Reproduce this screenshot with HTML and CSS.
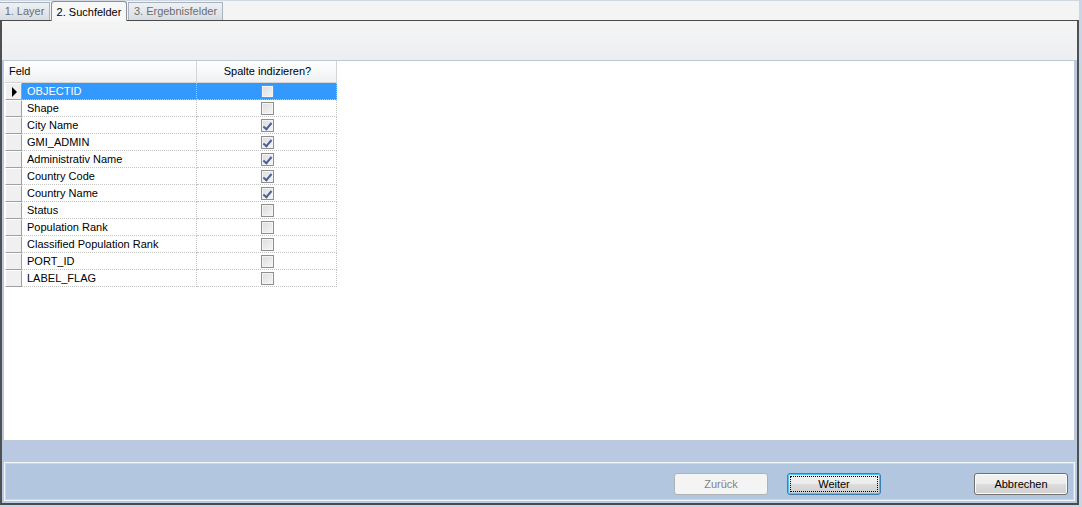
FILE: index.html
```html
<!DOCTYPE html>
<html>
<head>
<meta charset="utf-8">
<link rel="stylesheet" href="styles.css">
</head>
<body>
<div class="window">
  <div class="tabs">
    <div class="tab t1">1. Layer</div>
    <div class="tab t2 active">2. Suchfelder</div>
    <div class="tab t3">3. Ergebnisfelder</div>
    <div class="tabfill"></div>
  </div>
  <div class="panel">
    <div class="toolbar"></div>
    <div class="gridbox">
      <div class="grid">
        <div class="hdr hdr-feld">Feld</div>
        <div class="hdr hdr-idx">Spalte indizieren?</div>

        <div class="rh sel"><span class="arrow"></span></div><div class="cell name selc">OBJECTID</div><div class="cell chk selc"><span class="cb"></span></div>
        <div class="rh"></div><div class="cell name">Shape</div><div class="cell chk"><span class="cb"></span></div>
        <div class="rh"></div><div class="cell name">City Name</div><div class="cell chk"><span class="cb on"></span></div>
        <div class="rh"></div><div class="cell name">GMI_ADMIN</div><div class="cell chk"><span class="cb on"></span></div>
        <div class="rh"></div><div class="cell name">Administrativ Name</div><div class="cell chk"><span class="cb on"></span></div>
        <div class="rh"></div><div class="cell name">Country Code</div><div class="cell chk"><span class="cb on"></span></div>
        <div class="rh"></div><div class="cell name">Country Name</div><div class="cell chk"><span class="cb on"></span></div>
        <div class="rh"></div><div class="cell name">Status</div><div class="cell chk"><span class="cb"></span></div>
        <div class="rh"></div><div class="cell name">Population Rank</div><div class="cell chk"><span class="cb"></span></div>
        <div class="rh"></div><div class="cell name">Classified Population Rank</div><div class="cell chk"><span class="cb"></span></div>
        <div class="rh"></div><div class="cell name">PORT_ID</div><div class="cell chk"><span class="cb"></span></div>
        <div class="rh"></div><div class="cell name">LABEL_FLAG</div><div class="cell chk"><span class="cb"></span></div>
      </div>
    </div>
    <div class="strip"></div>
    <div class="btnarea">
      <div class="btnbox">
        <button class="btn disabled">Zurück</button>
        <button class="btn focus"><span class="focusrect">Weiter</span></button>
        <button class="btn cancel">Abbrechen</button>
      </div>
    </div>
  </div>
</div>
</body>
</html>
```

FILE: styles.css
```css
* { box-sizing: border-box; }
html, body { margin: 0; padding: 0; }
body {
  background: #c9d6e8;
  font-family: "Liberation Sans", Arial, sans-serif;
  font-size: 11px;
  color: #000;
  width: 1082px;
  height: 507px;
  overflow: hidden;
}
.window {
  width: 1079px;
  height: 505px;
  display: flex;
  flex-direction: column;
  background: #f4f4f4;
}
.tabs {
  height: 20px;
  display: flex;
  align-items: flex-end;
  background: #f4f4f4;
  border-top: 1px solid #cfd8e3;
}
.tab {
  height: 18px;
  line-height: 17px;
  text-align: center;
  color: #6d6d6d;
  background: linear-gradient(#eef1f4, #d8dde3);
  border: 1px solid #aab3bd;
  border-bottom: none;
  margin-right: 1px;
  font-size: 11px;
}
.t1 { width: 50px; border-left: none; }
.t2 { width: 76px; }
.t3 { width: 95px; }
.tab.active {
  height: 20px;
  margin-top: -1px;
  color: #000;
  background: #f7f7f7;
  border-color: #8a9098;
  border-radius: 3px 3px 0 0;
  line-height: 20px;
  position: relative;
  margin-bottom: -1px;
  z-index: 1;
}
.tabfill { flex: 1; }
.panel {
  flex: 1;
  display: flex;
  flex-direction: column;
  border-top: 1px solid #4a4a4a;
  border-left: 2px solid #505050;
  border-right: 2px solid #505050;
  border-bottom: 2px solid #4a4a4a;
  background: #b9c9e0;
}
.toolbar {
  height: 39px;
  background: linear-gradient(#f5f5f5, #eceef1);
}
.gridbox {
  height: 381px;
  margin: 0 2px 0 1px;
  background: #fff;
  border: 1px solid #bcc8d8;
  padding: 0 0 0 1px;
}
.grid {
  display: grid;
  grid-template-columns: 17px 175px 140px;
  grid-template-rows: 22px;
  grid-auto-rows: 17px;
  width: 333px;
}
.hdr {
  height: 22px;
  background: linear-gradient(#ffffff 0%, #f7f8f9 50%, #eef0f2 100%);
  border-right: 1px solid #d5d5d5;
  border-bottom: 1px solid #d5d5d5;
  line-height: 21px;
  font-size: 11px;
}
.hdr-feld { grid-column: 1 / span 2; padding-left: 4px; }
.hdr-idx { text-align: center; padding-left: 2px; }
.rh {
  background: #f0f0f0;
  border-top: 1px solid #ffffff;
  border-left: 1px solid #ffffff;
  border-right: 1px solid #a0a0a0;
  border-bottom: 1px solid #a0a0a0;
  display: flex;
  align-items: center;
  justify-content: center;
}
.arrow {
  width: 0; height: 0;
  border-left: 5px solid #000;
  border-top: 5px solid transparent;
  border-bottom: 5px solid transparent;
  margin-left: 1px;
}
.cell {
  border-right: 1px dotted #c4c4c4;
  border-bottom: 1px dotted #c4c4c4;
  line-height: 16px;
  white-space: nowrap;
}
.name { padding-left: 5px; }
.chk { display: flex; align-items: center; justify-content: center; padding-left: 1px; }
.selc { background: #3399ff; color: #fff; }
.cb {
  width: 13px; height: 13px;
  border: 1px solid #8e8f8f;
  background: linear-gradient(135deg, #dcdcdc, #f6f6f6);
  box-shadow: inset 0 0 0 1px #f4f4f4;
  position: relative;
}
.cb.on::after {
  content: "";
  position: absolute;
  left: 3px; top: 1px;
  width: 3px; height: 7px;
  border-right: 2px solid #4b5f98;
  border-bottom: 2px solid #4b5f98;
  transform: rotate(40deg);
}
.strip { height: 21px; background: #b8c9e1; }
.btnarea {
  flex: 1;
  padding: 0 2px 2px 2px;
  background: #b8c9e1;
}
.btnbox {
  height: 100%;
  border: 1px solid #f2f5fa;
  box-shadow: inset 0 0 0 1px #c9d6e8;
  background: #b3c6df;
  display: flex;
  align-items: center;
  justify-content: flex-end;
  padding: 5px 6px 0 0;
}
.btn {
  width: 94px;
  height: 22px;
  font-family: "Liberation Sans", Arial, sans-serif;
  font-size: 11px;
  color: #000;
  border: 1px solid #707070;
  border-radius: 3px;
  background: linear-gradient(#f2f2f2 0%, #ebebeb 50%, #dddddd 51%, #cfcfcf 100%);
  box-shadow: inset 0 0 0 1px #fcfcfc;
  padding: 0;
  display: flex;
  align-items: center;
  justify-content: center;
}
.btn.disabled {
  color: #838383;
  border-color: #adb2b5;
  background: #f4f4f4;
  box-shadow: none;
}
.btn.focus {
  margin-left: 19px;
  border-color: #3c7fb1;
  box-shadow: inset 0 0 0 1px #48c4f7;
  padding: 2px;
}
.focusrect {
  flex: 1;
  align-self: stretch;
  border: 1px dotted #000;
  display: flex;
  align-items: center;
  justify-content: center;
}
.btn.cancel { margin-left: 93px; }
```
